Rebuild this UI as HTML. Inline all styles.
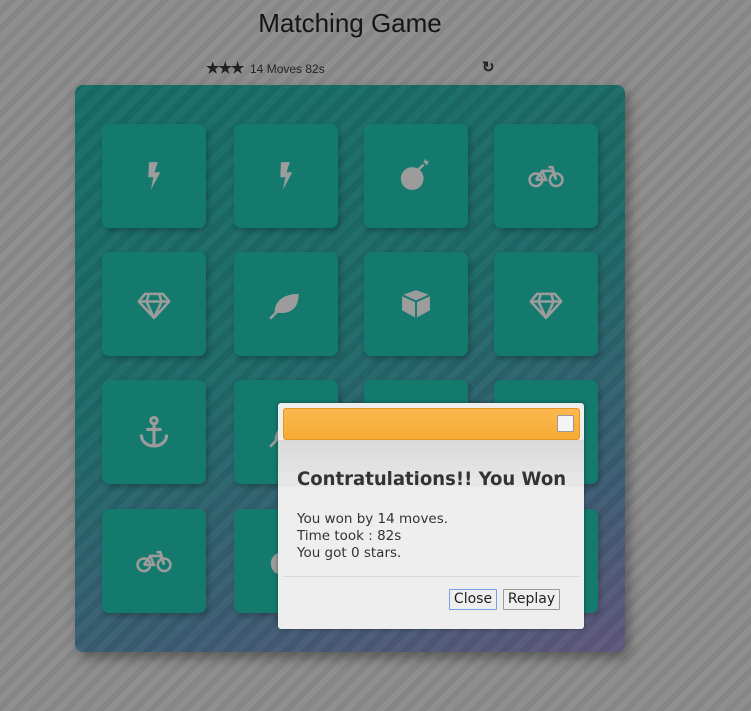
<!DOCTYPE html>
<html><head><meta charset="utf-8"><style>
body{margin:0;width:751px;height:711px;overflow:hidden;background:#8b8b8b;font-family:"Liberation Sans",sans-serif;position:relative}
.bg{position:absolute;inset:0;background:repeating-linear-gradient(135deg,rgba(255,255,255,0.035) 0 6px,rgba(0,0,0,0.035) 6px 12px)}
h1{position:absolute;top:8px;left:0;width:700px;text-align:center;margin:0;font-weight:normal;font-size:26px;color:#151515}
.score{position:absolute;top:59px;left:206px;font-size:12px;color:#222}
.score b{font-size:15px;letter-spacing:-1px}
.board{position:absolute;left:75px;top:85px;width:550px;height:567px;border-radius:8px;background:linear-gradient(160deg,#176f68 0%,#1f6a6a 45%,#3e5d74 78%,#62587e 100%);box-shadow:4px 6px 12px rgba(0,0,0,0.35);overflow:hidden}
.board:after{content:"";position:absolute;inset:0;background:repeating-linear-gradient(135deg,rgba(0,0,0,0.05) 0 7px,rgba(255,255,255,0.02) 7px 14px)}
.card{position:absolute;width:104px;height:104px;border-radius:7px;background:#137a6d;box-shadow:2px 3px 6px rgba(0,0,0,0.25);display:flex;align-items:center;justify-content:center;z-index:1}
.card svg{width:38px;height:38px;fill:#9c9c9c;stroke:#9c9c9c}
.dlg{position:absolute;left:278px;top:403px;width:306px;height:226px;background:#eeeeee;border-radius:3px;box-shadow:0 0 4px rgba(0,0,0,0.4);z-index:5}
.tb{position:absolute;left:5px;top:5px;width:295px;height:30px;border:1px solid #e09620;border-radius:3px;background:linear-gradient(#fbb84f,#f6ab35)}
.tb i{position:absolute;right:5px;top:6px;width:15px;height:15px;background:#f4f4f4;border:1px solid #999;border-radius:2px}
.hd{position:absolute;left:0;top:37px;width:306px;height:47px;background:linear-gradient(#d9d9d9,#e8e8e8)}
.ttl{position:absolute;left:19px;top:65px;font-family:"DejaVu Sans",sans-serif;font-weight:bold;font-size:19px;color:#333;transform:scaleX(0.95);transform-origin:left}
.txt{position:absolute;left:19px;top:108px;font-family:"DejaVu Sans",sans-serif;font-size:13.5px;line-height:17px;color:#333}
.sep{position:absolute;left:5px;right:5px;top:173px;border-top:1px solid #d7d7d7}
.btn{position:absolute;top:186px;height:19px;border:1px solid #999;background:#efefef;font-family:"DejaVu Sans",sans-serif;font-size:14px;line-height:19px;text-align:center;color:#222;border-radius:1px}
</style></head><body><div class="bg"></div>
<svg width="0" height="0" style="position:absolute">
<defs>
<symbol id="bolt" viewBox="0 0 30 30"><path stroke="none" d="M11 4h7l-2.5 8h4.5l-7.5 14 2-10h-4z"/></symbol>
<symbol id="bomb" viewBox="0 0 30 30"><circle stroke="none" cx="12" cy="17" r="9"/><path fill="none" stroke-width="2" d="M17 10l4-4"/><path fill="none" stroke-width="1.2" d="M23 3v3M21 4l4 0M22 2l2 4"/></symbol>
<symbol id="bike" viewBox="0 0 30 30"><g fill="none" stroke-width="2"><circle cx="7" cy="18" r="5"/><circle cx="23" cy="18" r="5"/><path d="M7 18l5-7h8l3 7M12 11l3 7h-8M17 8h3l3 10"/></g></symbol>
<symbol id="dia" viewBox="0 0 30 30"><g fill="none" stroke-width="2" stroke-linejoin="round"><path d="M8 7h14l5 6-12 13L3 13z"/><path d="M3 13h24M11 7l-2 6 6 13 6-13-2-6"/></g></symbol>
<symbol id="leaf" viewBox="0 0 30 30"><path stroke="none" d="M6 22c0-10 8-15 19-15 0 11-6 16-16 15z"/><path fill="none" stroke-width="2" stroke-linecap="round" d="M3 26l9-9"/></symbol>
<symbol id="cube" viewBox="0 0 30 30"><path stroke="none" d="M15 4l11 4v12l-11 6-11-6V8z"/><path fill="none" stroke="#137a6d" stroke-width="1.5" d="M4 8l11 5 11-5M15 13v13"/></symbol>
<symbol id="anc" viewBox="0 0 30 30"><g fill="none" stroke-width="2.5"><circle cx="15" cy="6" r="2.5"/><path d="M15 9v17M9 13h12M5 17c0 6 5 9 10 9s10-3 10-9"/></g></symbol>
</defs></svg>
<h1>Matching Game</h1>
<div class="score"><b>★★★</b>&nbsp; 14 Moves 82s</div>
<div style="position:absolute;left:482px;top:58px;font-size:15px;font-weight:bold;color:#222">↻</div>
<div class="board">
<div class="card" style="left:27px;top:39px"><svg><use href="#bolt"/></svg></div>
<div class="card" style="left:159px;top:39px"><svg><use href="#bolt"/></svg></div>
<div class="card" style="left:289px;top:39px"><svg><use href="#bomb"/></svg></div>
<div class="card" style="left:419px;top:39px"><svg><use href="#bike"/></svg></div>
<div class="card" style="left:27px;top:167px"><svg><use href="#dia"/></svg></div>
<div class="card" style="left:159px;top:167px"><svg><use href="#leaf"/></svg></div>
<div class="card" style="left:289px;top:167px"><svg><use href="#cube"/></svg></div>
<div class="card" style="left:419px;top:167px"><svg><use href="#dia"/></svg></div>
<div class="card" style="left:27px;top:295px"><svg><use href="#anc"/></svg></div>
<div class="card" style="left:159px;top:295px"><svg><use href="#leaf"/></svg></div>
<div class="card" style="left:289px;top:295px"><svg><use href="#anc"/></svg></div>
<div class="card" style="left:419px;top:295px"><svg><use href="#cube"/></svg></div>
<div class="card" style="left:27px;top:424px"><svg><use href="#bike"/></svg></div>
<div class="card" style="left:159px;top:424px"><svg><use href="#bomb"/></svg></div>
<div class="card" style="left:289px;top:424px"><svg><use href="#leaf"/></svg></div>
<div class="card" style="left:419px;top:424px"><svg><use href="#anc"/></svg></div>
</div>
<div class="dlg">
<div class="tb"><i></i></div>
<div class="hd"></div>
<div class="ttl">Contratulations!! You Won</div>
<div class="txt">You won by 14 moves.<br>Time took : 82s<br>You got 0 stars.</div>
<div class="sep"></div>
<div class="btn" style="left:171px;width:46px;border-color:#7a9fe0">Close</div>
<div class="btn" style="left:225px;width:55px">Replay</div>
</div>
</body></html>
